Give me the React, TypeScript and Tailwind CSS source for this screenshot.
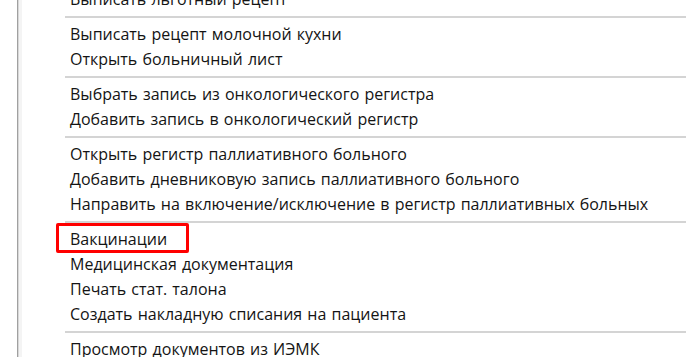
import React from "react";

type Item = { t: string } | { sep: true };

const items: Item[] = [
  { t: "Выписать льготный рецепт" },
  { sep: true },
  { t: "Выписать рецепт молочной кухни" },
  { t: "Открыть больничный лист" },
  { sep: true },
  { t: "Выбрать запись из онкологического регистра" },
  { t: "Добавить запись в онкологический регистр" },
  { sep: true },
  { t: "Открыть регистр паллиативного больного" },
  { t: "Добавить дневниковую запись паллиативного больного" },
  { t: "Направить на включение/исключение в регистр паллиативных больных" },
  { sep: true },
  { t: "Вакцинации" },
  { t: "Медицинская документация" },
  { t: "Печать стат. талона" },
  { t: "Создать накладную списания на пациента" },
  { sep: true },
  { t: "Просмотр документов из ИЭМК" },
];

export default function App() {
  return (
    <div
      className="w-[686px] h-[357px] overflow-hidden bg-white flex"
      style={{ fontFamily: '"Open Sans", "Noto Sans", sans-serif' }}
    >
      <div className="w-[17px] shrink-0 bg-white" />
      <div className="w-px shrink-0 bg-[#a0a0a0]" />
      <div className="w-px shrink-0 bg-[#d8d8d8]" />
      <div className="w-[3px] shrink-0 bg-[#f4f4f4]" />
      <div className="flex-1 flex flex-col mt-[-13px] pl-[43px]">
        {items.map((it, i) =>
          "sep" in it ? (
            <div key={i} className="h-[10px] shrink-0 flex items-center">
              <div className="w-full h-[2px] bg-[#d4d4d4]" />
            </div>
          ) : (
            <div
              key={i}
              className="relative h-[25px] shrink-0 flex items-center pl-[5px] pb-[2px] text-[16px] font-medium [word-spacing:1px] text-[#141414] whitespace-nowrap"
            >
              {it.t}
              {it.t === "Вакцинации" && (
                <div className="absolute left-[-9px] top-[-4px] w-[133px] h-[30px] border-[3px] border-[#ff0000] rounded-[2px]" />
              )}
            </div>
          )
        )}
      </div>
    </div>
  );
}
